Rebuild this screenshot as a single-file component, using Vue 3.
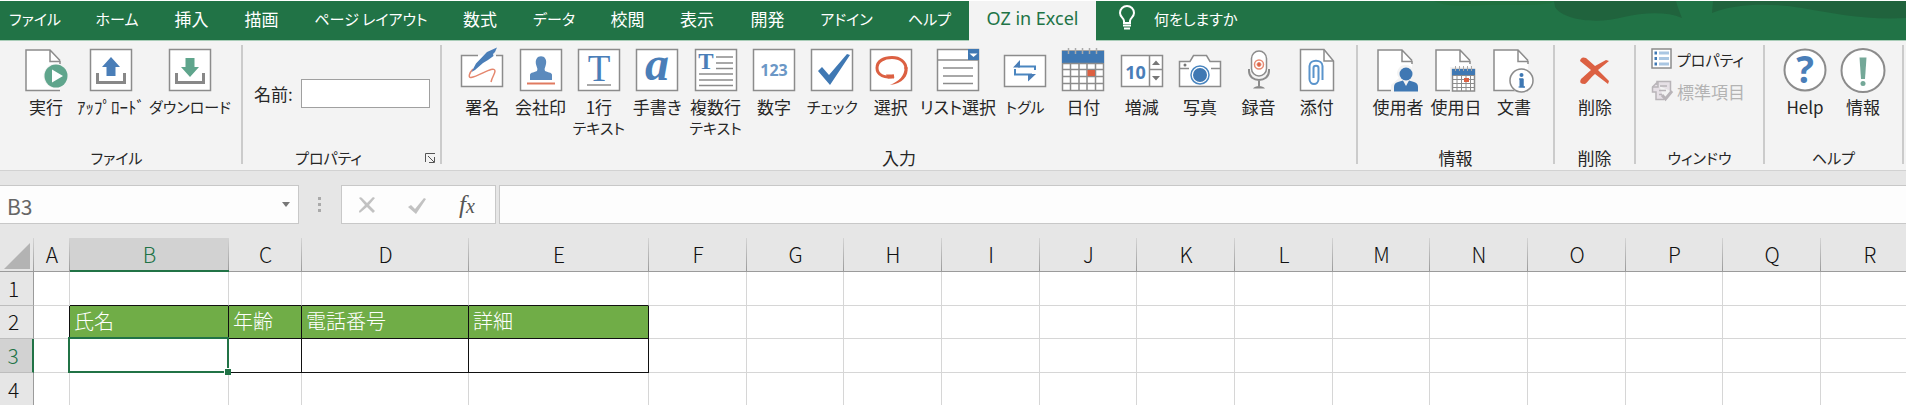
<script setup>
import { ref } from 'vue'

const tabs = ['ファイル', 'ホーム', '挿入', '描画', 'ページ レイアウト', '数式', 'データ', '校閲', '表示', '開発', 'アドイン', 'ヘルプ', 'OZ in Excel']
const activeTab = ref('OZ in Excel')

const groups = [
  {
    key: 'file', label: 'ファイル', items: [
      { icon: 'run', lines: ['実行'] },
      { icon: 'upload', lines: ['ｱｯﾌﾟﾛｰﾄﾞ'] },
      { icon: 'download', lines: ['ダウンロード'] }
    ]
  },
  { key: 'props', label: 'プロパティ', items: [] },
  {
    key: 'entry', label: '入力', items: [
      { icon: 'sign', lines: ['署名'] },
      { icon: 'stamp', lines: ['会社印'] },
      { icon: 'text', lines: ['1行', 'テキスト'] },
      { icon: 'hand', lines: ['手書き'] },
      { icon: 'multi', lines: ['複数行', 'テキスト'] },
      { icon: 'number', lines: ['数字'] },
      { icon: 'check', lines: ['チェック'] },
      { icon: 'choice', lines: ['選択'] },
      { icon: 'list', lines: ['リスト選択'] },
      { icon: 'toggle', lines: ['トグル'] },
      { icon: 'date', lines: ['日付'] },
      { icon: 'spin', lines: ['増減'] },
      { icon: 'photo', lines: ['写真'] },
      { icon: 'mic', lines: ['録音'] },
      { icon: 'clip', lines: ['添付'] }
    ]
  },
  {
    key: 'info', label: '情報', items: [
      { icon: 'user', lines: ['使用者'] },
      { icon: 'useday', lines: ['使用日'] },
      { icon: 'doc', lines: ['文書'] }
    ]
  },
  { key: 'delete', label: '削除', items: [{ icon: 'delete', lines: ['削除'] }] },
  { key: 'window', label: 'ウィンドウ', items: [] },
  {
    key: 'help', label: 'ヘルプ', items: [
      { icon: 'help', lines: ['Help'] },
      { icon: 'about', lines: ['情報'] }
    ]
  }
]

// Labels made of katakana only are set one step smaller.
const isKana = (s) => /^[ァ-ヶー ]+$/.test(s)

const framed = ['upload', 'download', 'stamp', 'text', 'hand', 'multi', 'number', 'check', 'choice', 'list']
const paged = ['run', 'user', 'useday', 'doc']

const columns = [
  ['A', 36], ['B', 159], ['C', 73], ['D', 167], ['E', 180], ['F', 98], ['G', 97], ['H', 98], ['I', 98],
  ['J', 97], ['K', 98], ['L', 98], ['M', 97], ['N', 98], ['O', 98], ['P', 97], ['Q', 98], ['R', 98]
].map(([name, width]) => ({ name, width }))
const tableWidth = columns.reduce((sum, c) => sum + c.width, 34)
const rows = [1, 2, 3, 4]
const cells = { B2: '氏名', C2: '年齢', D2: '電話番号', E2: '詳細' }
const fieldName = ref('')
const cellName = ref('B3')
const formula = ref('')

function cellClass(col, row) {
  const inTable = 'BCDE'.includes(col)
  return {
    head: inTable && row === 2,
    boxed: inTable && row === 3,
    above: inTable && row === 1,
    before: col === 'A' && (row === 2 || row === 3),
    selected: col + row === 'B3'
  }
}
</script>

<template>
  <div class="app">
    <header class="tabbar">
      <svg class="swirl" width="480" height="39" viewBox="0 0 480 39" aria-hidden="true">
        <path d="M8 0H130C120 6 80 3 60 4S20 6 8 0Z" fill="#20703f" />
        <path d="M128 0H250C252 7 254 12 256 17C240 10 216 12 198 16C172 23 138 20 129 6Z" fill="#20633d" />
        <path d="M287 0H480V17C440 19 410 13 376 7C346 2 310 2 286 12Z" fill="#20633d" />
      </svg>
      <nav class="tabs">
        <button v-for="t in tabs" :key="t" type="button" class="tab" :class="{ active: t === activeTab, kana: isKana(t) }" @click="activeTab = t">{{ t }}</button>
      </nav>
      <button type="button" class="tell">
        <svg width="18" height="26" viewBox="0 0 18 26" fill="none" stroke="#fff" stroke-width="2">
          <path d="M6 18V16C6 13 2 12 2 8A7 7 0 0 1 16 8C16 12 12 13 12 16V18Z" />
          <path d="M5 20.500H13M6 23.500H12" />
        </svg>
        <span class="kana">何をしますか</span>
      </button>
    </header>

    <div class="ribbon">
      <section v-for="g in groups" :key="g.key" class="group" :class="g.key">
        <div v-if="g.key === 'props'" class="name-row">
          <label for="field-name">名前:</label>
          <input id="field-name" v-model="fieldName" type="text" />
        </div>

        <div v-else-if="g.key === 'window'" class="stack">
          <button type="button" class="small">
            <svg width="22" height="22" viewBox="0 0 22 22">
              <rect x="1" y="1" width="19" height="19" fill="#fff" stroke="#8c8c8c" stroke-width="1.500" />
              <path d="M8 5H18M8 10.500H18M8 16H18" stroke="#a9c6e2" stroke-width="3" />
              <path d="M3.500 5H6M3.500 10.500H6M3.500 16H6" stroke="#3f78b3" stroke-width="3" />
            </svg>
            <span class="kana">プロパティ</span>
          </button>
          <button type="button" class="small" disabled>
            <svg width="22" height="22" viewBox="0 0 22 22" fill="none" stroke="#b8b4b8" stroke-width="1.500">
              <path d="M6 5V1.500H19.500V11M7 1.500L1.500 7V12H5V19.500H13" fill="#e6e0e6" />
              <path d="M9 6H16M1.500 7H7V2M8 10.500H15M8 14.500H11" />
              <path d="M11 15L14.500 19L21 11" stroke-width="3" />
            </svg>
            <span>標準項目</span>
          </button>
        </div>

        <div v-else class="items">
          <button v-for="b in g.items" :key="b.icon" type="button" class="big">
            <svg width="46" height="46" viewBox="0 0 46 46" fill="none" stroke="#8c8c8c" stroke-width="1.500">
              <rect v-if="framed.includes(b.icon)" x="2.500" y="2.500" width="41" height="41" fill="#fff" />
              <g v-if="paged.includes(b.icon)">
                <path d="M27 3H3V43.500H37V15L27 3Z" fill="#fff" stroke="none" />
                <path d="M37 43.500H3V3H27L37 13.500M27 3V14.500H37V17" />
              </g>

              <template v-if="b.icon === 'run'">
                <circle cx="33" cy="29" r="12.500" fill="#f3f3f3" stroke="none" />
                <circle cx="33" cy="29" r="11.500" fill="#5fa58c" stroke="none" />
                <path d="M29 22.500V35.500L40 29Z" fill="#fff" stroke="none" />
              </template>
              <template v-else-if="b.icon === 'upload'">
                <path d="M9.500 26V35.500H36.500V26" stroke="#888" stroke-width="3" />
                <path d="M23 10L32 20H27.500V29H18.500V20H14Z" fill="#4a7eb8" stroke="none" />
              </template>
              <template v-else-if="b.icon === 'download'">
                <path d="M9.500 26V35.500H36.500V26" stroke="#888" stroke-width="3" />
                <path d="M23 30L32 20H27.500V11H18.500V20H14Z" fill="#5fa58c" stroke="none" />
              </template>
              <template v-else-if="b.icon === 'sign'">
                <rect x="2.500" y="8.500" width="41" height="31" fill="#fff" stroke="none" />
                <path d="M19 8.500H2.500V39.500H43.500V8.500H37" />
                <path d="M14 22C10 26 9 31 12 30.500C21 29 35 18 36 24C36 27 33 30 32 35" stroke="#e5876e" />
                <path d="M12.500 25L17 16.500L28 5L38 0.500L36 5L34 7L34.500 9L29 13L24 16L16 23Z" fill="#4a7eb8" stroke="none" />
              </template>
              <template v-else-if="b.icon === 'stamp'">
                <path d="M12 33V28Q12 26 15 25.500L19 24Q20 22 18.500 19C14 6 32 6 27.500 19Q26 22 27 24L31 25.500Q34 26 34 28V33Z" fill="#5b8abd" stroke="none" />
                <path d="M9 36.500H37" stroke="#e07a60" stroke-width="2" />
              </template>
              <template v-else-if="b.icon === 'text'">
                <text x="23" y="33.500" class="serif t-large">T</text>
                <path d="M11 38H35" />
              </template>
              <template v-else-if="b.icon === 'hand'">
                <text x="23" y="33" class="serif script">a</text>
              </template>
              <template v-else-if="b.icon === 'multi'">
                <text x="13" y="22" class="serif t-small">T</text>
                <path d="M23 10H40M23 16H40M23 21.500H40M6 27H40M6 33H40M6 38.500H40" />
              </template>
              <template v-else-if="b.icon === 'number'">
                <text x="23" y="29" class="sans">123</text>
              </template>
              <template v-else-if="b.icon === 'check'">
                <path d="M9 24L13 20L20 28L38 7L41 8L21 38Z" fill="#3f78b3" stroke="none" />
              </template>
              <template v-else-if="b.icon === 'choice'">
                <path d="M26 29C17 32 9 28 9 21C9 14 16 10.500 24 10.500C32 10.500 38 15 38 22" stroke="#dc6042" stroke-width="3" />
                <path d="M36.500 20H39.500C41 29 34 37 22 38C31 34 37 29 36.500 20Z" fill="#dc6042" stroke="none" />
                <path d="M18 27.500H26V31.500H20Z" fill="#dc6042" stroke="none" />
              </template>
              <template v-else-if="b.icon === 'list'">
                <path d="M3 13H43M8 21H38M8 29H38M8 36.500H38" />
                <rect x="33" y="2" width="11" height="11" fill="#3f78b3" stroke="none" />
                <path d="M34.500 6.500H42.500L38.500 10Z" fill="#fff" stroke="none" />
              </template>
              <template v-else-if="b.icon === 'toggle'">
                <rect x="2.500" y="8.500" width="41" height="31" fill="#fff" />
                <path d="M16 19.500H33V23M13 22V27.500H30" stroke="#4a86c0" stroke-width="2" />
                <path d="M11 20.500L18 13V20.500ZM34 27H26V34.500Z" fill="#4a7eb8" stroke="none" />
              </template>
              <template v-else-if="b.icon === 'date'">
                <rect x="2.500" y="4" width="41" height="39.500" fill="#fff" />
                <rect x="2" y="4" width="42" height="12" fill="#3f78b3" stroke="none" />
                <path d="M3 16.500H43M3 22.500H43M3 29.500H43M3 36.500H43M10.500 16V43M19 16V43M27 16V43M35.500 16V43" />
                <path d="M8.500 1V7M15.500 1V7M22.500 1V7M29.500 1V7M36.500 1V7" stroke="#aaa" />
                <rect x="27.500" y="23" width="7.500" height="6" fill="#dc6042" stroke="none" />
              </template>
              <template v-else-if="b.icon === 'spin'">
                <rect x="2.500" y="8.500" width="41" height="31" fill="#fff" />
                <path d="M30.500 8V40M30.500 22.500H43" />
                <path d="M33 18L37 13.500L41 18ZM33 29L37 33.500L41 29Z" fill="#777" stroke="none" />
                <text x="16.500" y="31.500" class="ten">10</text>
              </template>
              <template v-else-if="b.icon === 'photo'">
                <path d="M2.500 14.500H13L16.500 8.500H29.500L33 14.500H43.500V39.500H2.500Z" fill="#fff" />
                <path d="M3 21.500H12M34 21.500H43" />
                <circle cx="8" cy="18" r="1.500" fill="#777" stroke="none" />
                <circle cx="23" cy="28" r="9" fill="#fff" stroke="#4a86c0" stroke-width="1.500" />
                <circle cx="23" cy="28" r="7" fill="#3f78b3" stroke="none" />
              </template>
              <template v-else-if="b.icon === 'mic'">
                <rect x="16.500" y="4" width="15" height="25" rx="7.500" fill="#fff" />
                <path d="M14 22V24C14 36 34 36 34 24V22M24 33V39" stroke-width="2" />
                <path d="M18 41.500C20 38 28 38 30 41.500Z" fill="#888" stroke="none" />
                <circle cx="24" cy="17.500" r="4.500" stroke="#e58a73" />
                <circle cx="24" cy="17.500" r="2" fill="#dc6042" stroke="#e58a73" stroke-width="1" />
              </template>
              <template v-else-if="b.icon === 'clip'">
                <path d="M6.500 2.500H30L39.500 14V43.500H6.500Z" fill="#fff" />
                <path d="M30 3V14H39" />
                <path d="M28.500 33V19C28.500 12 15.500 12 15.500 19V32C15.500 38.500 24.500 38.500 24.500 32V21C24.500 18 19.500 18 19.500 21V31" stroke="#5a94cc" stroke-width="2" />
              </template>
              <template v-else-if="b.icon === 'user'">
                <path d="M31 18A8 8 0 0 0 24 31L16 38V46H45V36L37 31A8 8 0 0 0 31 18Z" fill="#f3f3f3" stroke="none" />
                <circle cx="31" cy="27" r="6.500" fill="#3f78b3" stroke="none" />
                <path d="M19 44.500V40Q19 36 23 35L28 33.500L31 39L34 33.500L39 35Q43 36 43 40V44.500Z" fill="#3f78b3" stroke="none" />
              </template>
              <template v-else-if="b.icon === 'useday'">
                <rect x="17" y="20" width="27" height="26" fill="#f3f3f3" stroke="none" />
                <rect x="19.500" y="22.500" width="22" height="21.500" fill="#fff" />
                <rect x="19" y="22" width="23" height="6.500" fill="#3f78b3" stroke="none" />
                <path d="M20 28.500H42M20 32.500H42M20 36.500H42M20 40.500H42M24 28V44M28.500 28V44M33 28V44M37.500 28V44" stroke-width="1" />
                <path d="M22.500 19V24M26.500 19V24M30.500 19V24M34.500 19V24M38.500 19V24" stroke="#aaa" stroke-width="1" />
                <rect x="31" y="31" width="5" height="4" fill="#dc6042" stroke="none" />
              </template>
              <template v-else-if="b.icon === 'doc'">
                <circle cx="30.500" cy="33.500" r="12.500" fill="#f3f3f3" stroke="none" />
                <circle cx="30.500" cy="33.500" r="11.500" fill="#fff" />
                <path d="M28 32H32V40H34H27.500" stroke="#3f78b3" stroke-width="1" />
                <path d="M30.500 31.500V40.500" stroke="#3f78b3" stroke-width="4" />
                <circle cx="30.500" cy="28" r="2" fill="#3f78b3" stroke="none" />
              </template>
              <template v-else-if="b.icon === 'delete'">
                <path d="M8 14Q9 9 14 11L23 19L34 13L37 14L26 23L37 34L36 37L23 27C18 31 16 35 13 37Q6 37 9 32L19 23Z" fill="#dc6042" stroke="none" />
              </template>
              <template v-else-if="b.icon === 'help'">
                <circle cx="23" cy="23" r="20.500" fill="#fff" stroke-width="2" />
                <text x="23" y="36" class="question">?</text>
              </template>
              <template v-else-if="b.icon === 'about'">
                <circle cx="23" cy="23.500" r="21.500" fill="#fff" stroke-width="2" />
                <path d="M19.500 10.500H26.500L25 32H21Z" fill="#74a898" stroke="none" />
                <circle cx="23" cy="36.500" r="2.500" fill="#74a898" stroke="none" />
              </template>
            </svg>
            <span v-for="line in b.lines" :key="line" :class="{ kana: isKana(line) }">{{ line }}</span>
          </button>
        </div>

        <footer class="caption" :class="{ kana: isKana(g.label) }">
          {{ g.label }}
          <button v-if="g.key === 'props'" type="button" class="launcher" aria-label="プロパティ">
            <svg width="12" height="12" viewBox="0 0 12 12" fill="none" stroke="#555" stroke-width="1">
              <path d="M1.500 10V1.500H11M4 4L10 10M10.500 5V10.500H5" />
            </svg>
          </button>
        </footer>
      </section>
    </div>

    <div class="formula-bar">
      <div class="name-box">
        <input v-model="cellName" type="text" aria-label="Name" />
        <button type="button" aria-label="▾">
          <svg width="8" height="5" viewBox="0 0 8 5"><path d="M0 0H8L4 5Z" fill="#777" /></svg>
        </button>
      </div>
      <svg class="dots" width="4" height="16" viewBox="0 0 4 16" fill="#aaa">
        <path d="M0 0H3V3H0ZM0 6H3V9H0ZM0 12H3V15H0Z" />
      </svg>
      <div class="actions">
        <button type="button" aria-label="×">
          <svg width="18" height="18" viewBox="0 0 18 18" fill="#c2c2c2">
            <path d="M1 2Q3 0 5 3L9 7L15 1L17 2L11 9L17 15L15 17L9 11L3 16Q1 18 1 15L7 9Z" />
          </svg>
        </button>
        <button type="button" aria-label="✓">
          <svg width="18" height="18" viewBox="0 0 18 18" fill="#c2c2c2"><path d="M0 11L3 9L7 13L16 2L18 3L8 18Z" /></svg>
        </button>
        <button type="button" class="fx"><span class="f">f</span><span class="x">x</span></button>
      </div>
      <input v-model="formula" class="formula" type="text" aria-label="fx" />
    </div>

    <div class="sheet">
      <table :style="{ width: tableWidth + 'px' }">
        <colgroup>
          <col class="row-head" />
          <col v-for="c in columns" :key="c.name" :style="{ width: c.width + 'px' }" />
        </colgroup>
        <thead>
          <tr>
            <th class="corner">
              <svg width="26" height="26" viewBox="0 0 26 26"><path d="M26 0V26H0Z" fill="#b3b3b3" /></svg>
            </th>
            <th v-for="c in columns" :key="c.name" scope="col" :class="{ current: c.name === 'B' }">{{ c.name }}</th>
          </tr>
        </thead>
        <tbody>
          <tr v-for="r in rows" :key="r">
            <th scope="row" :class="{ current: r === 3 }">{{ r }}</th>
            <td v-for="c in columns" :key="c.name" :class="cellClass(c.name, r)">{{ cells[c.name + r] }}</td>
          </tr>
        </tbody>
      </table>
    </div>
  </div>
</template>

<style>
body {
  background: #fff;
}
</style>

<style scoped>
.app {
  display: flex;
  flex-direction: column;
  height: 100vh;
  overflow: hidden;
  background: #e6e6e6;
  color: #262626;
  font-family: "Noto Sans CJK JP", "Noto Sans", sans-serif;
  font-size: 17px;
  line-height: 21px;
}

.app * {
  box-sizing: border-box;
}

button,
input {
  margin: 0;
  padding: 0;
  border: 0;
  background: none;
  color: inherit;
  font: inherit;
}

svg {
  display: block;
  flex: none;
  overflow: visible;
}

.tabbar {
  position: relative;
  display: flex;
  flex: none;
  border-top: 1px solid #fff;
  background: #217346;
  box-shadow: inset 0 -1px #a9cdb8;
  height: 41px;
}

.swirl {
  position: absolute;
  top: 0;
  right: 0;
}

.tabs {
  display: grid;
  grid-template-columns: 77px 80px 69px 71px 148px 70px 78px 69px 70px 71px 87px 79px 127px;
}

.tab {
  display: flex;
  align-items: center;
  justify-content: center;
  padding-bottom: 6px;
  color: #fff;
  white-space: nowrap;
  font-feature-settings: "palt";
}

.tab:first-child {
  padding-right: 7px;
}

.tab.active {
  background: #f3f3f3;
  color: #217346;
  font-family: "Noto Sans", sans-serif;
  font-size: 18px;
}

.tell {
  display: flex;
  align-items: center;
  gap: 18px;
  margin-left: 22px;
  padding-bottom: 6px;
  color: #fff;
  font-feature-settings: "palt";
  white-space: nowrap;
}

.kana {
  font-size: 15px;
}

.ribbon {
  display: grid;
  flex: none;
  grid-template-columns: 243px 199px 916px 197px 81px 129px 139px;
  border-bottom: 1px solid #d2d2d2;
  background: #f3f3f3;
  font-feature-settings: "palt";
}

.group {
  display: flex;
  flex-direction: column;
  height: 129px;
  padding: 6px 2px 2px 0;
  background: linear-gradient(#cbcbcb, #cbcbcb) right 0 top 4px / 2px 119px no-repeat;
}

.items {
  display: grid;
  flex: 1;
  grid-auto-columns: 58px;
  grid-auto-flow: column;
  padding-left: 11px;
}

.file .items {
  grid-template-columns: 70px 60px 98px;
}

.entry .items {
  grid-template-columns: repeat(8, 1fr) 76px repeat(6, 1fr);
  padding-right: 10px;
}

.big {
  display: flex;
  flex-direction: column;
  align-items: center;
  min-width: 0;
  white-space: nowrap;
}

.big svg {
  margin-bottom: 3px;
}

.caption {
  position: relative;
  display: flex;
  justify-content: center;
  height: 20px;
  line-height: 20px;
}

.file .caption {
  padding-right: 8px;
}

.props .caption {
  padding-right: 26px;
}

.launcher {
  position: absolute;
  right: 4px;
  bottom: 4px;
}

.name-row {
  display: flex;
  flex: 1;
  align-items: center;
  gap: 8px;
  padding: 0 10px 9px 11px;
  white-space: nowrap;
}

.name-row input {
  flex: 1;
  min-width: 0;
  height: 29px;
  padding: 0 4px;
  border: 1px solid #a0a0a0;
  background: #fff;
}

.stack {
  display: flex;
  flex: 1;
  flex-direction: column;
  align-items: flex-start;
  gap: 10px;
  padding: 1px 0 0 15px;
}

.small {
  display: flex;
  align-items: center;
  gap: 4px;
  white-space: nowrap;
}

.small:disabled {
  color: #b3b3b3;
}

text {
  fill: #4a7eb8;
  stroke: none;
  text-anchor: middle;
}

.serif {
  font-family: "Liberation Serif", serif;
}

.t-large {
  font-size: 37px;
}

.t-small {
  font-size: 23px;
  font-weight: bold;
}

.script {
  font-size: 48px;
  font-style: italic;
  font-weight: bold;
}

.sans {
  fill: #6b97c6;
  font: bold 16px "Noto Sans", sans-serif;
}

.ten {
  font: bold 18px "Noto Sans", sans-serif;
}

.question {
  font: bold 37px "Open Sans", sans-serif;
}

.formula-bar {
  display: flex;
  flex: none;
  align-items: center;
  padding: 14px 0;
}

.name-box,
.actions,
.formula {
  height: 39px;
  border: 1px solid #c8c8c8;
  background: #fdfdfd;
}

.name-box {
  display: flex;
  align-items: center;
  width: 299px;
  padding-right: 8px;
  border-left: 0;
}

.name-box input {
  flex: 1;
  min-width: 0;
  padding: 3px 0 0 7px;
  color: #666;
  font-size: 21px;
  line-height: 32px;
}

.dots {
  margin: 0 19px;
}

.actions {
  display: grid;
  grid-template-columns: repeat(3, 50px);
  width: 155px;
  margin-right: 3px;
}

.actions button {
  display: flex;
  align-items: center;
  justify-content: center;
}

.fx {
  color: #555;
  font-family: "Liberation Serif", serif;
  font-style: italic;
}

.fx .f {
  font-size: 25px;
}

.fx .x {
  padding-top: 4px;
  font-size: 20px;
}

.formula {
  flex: 1;
  min-width: 0;
  padding: 0 8px;
  border-right: 0;
  font-size: 21px;
}

.sheet {
  flex: 1;
  min-height: 0;
  overflow: hidden;
}

table {
  table-layout: fixed;
  border-collapse: separate;
  border-spacing: 0;
  background: #fff;
  font-size: 21px;
  line-height: 30px;
}

.row-head {
  width: 34px;
}

th,
td {
  height: 34px;
  padding: 0 0 2px;
  font-weight: 300;
  white-space: nowrap;
}

tbody tr:nth-child(2) > * {
  height: 33px;
}

th {
  color: #111;
}

thead th {
  border-bottom: 1px solid #9b9b9b;
  background: linear-gradient(#d4d4d4, #9b9b9b) right / 1px 100% no-repeat #e6e6e6;
}

thead th.current {
  padding-bottom: 1px;
  border-bottom: 2px solid #217346;
  background-color: #d2d2d2;
  color: #217346;
}

.corner svg {
  margin: 4px 0 0 4px;
}

tbody th {
  padding-right: 6px;
  border-right: 1px solid #9b9b9b;
  border-bottom: 1px solid #bdbdbd;
  background: #e6e6e6;
}

tbody th.current {
  border-right: 2px solid #217346;
  background: #d2d2d2;
  color: #217346;
}

td {
  padding-left: 4px;
  border-right: 1px solid #d6d6d6;
  border-bottom: 1px solid #d6d6d6;
}

td.head,
td.boxed {
  border-color: #111;
}

td.head {
  background: #70ad47;
  color: #fff;
  font-size: 20px;
}

td.above {
  border-bottom-color: #111;
}

td.before {
  border-right-color: #111;
}

td.selected {
  position: relative;
}

td.selected::before {
  position: absolute;
  inset: -2px -1px -1px -2px;
  border: 2px solid #217346;
  content: "";
}

td.selected::after {
  position: absolute;
  right: -3px;
  bottom: -3px;
  width: 6px;
  height: 6px;
  border: 1px solid #fff;
  border-width: 1px 0 0 1px;
  background: #217346;
  content: "";
}
</style>
